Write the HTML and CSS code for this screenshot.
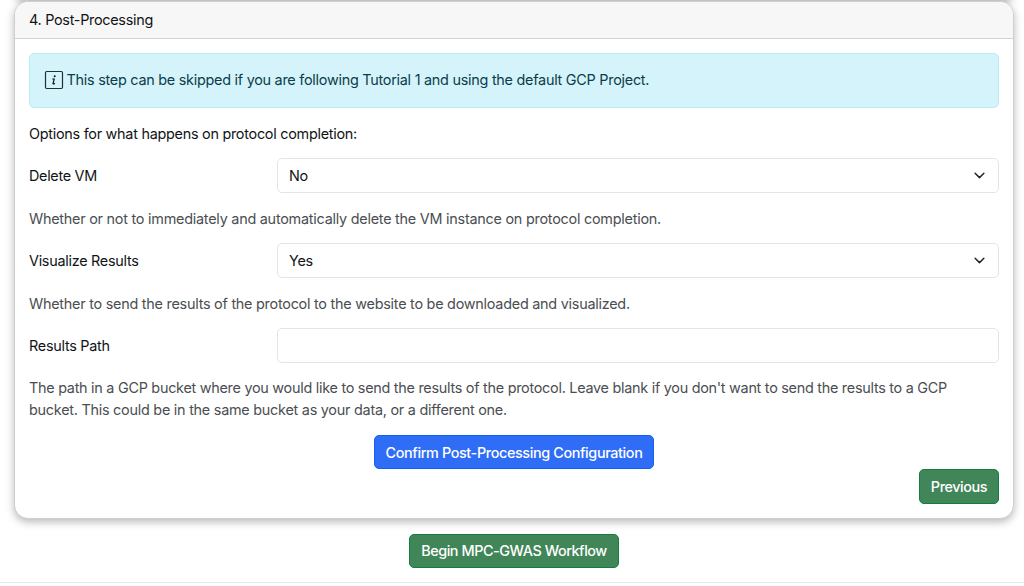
FILE: index.html
```html
<!DOCTYPE html>
<html lang="en">
<head>
<meta charset="utf-8">
<title>Post-Processing</title>
<link rel="stylesheet" href="styles.css">
</head>
<body>
<main class="page">
  <div class="card card-prior"></div>
  <section class="card">
    <header class="card-header"><span class="t-head">4. Post-Processing</span></header>
    <div class="card-body">
      <div class="alert">
        <svg class="info" viewBox="0 0 20 20" width="20" height="20" fill="none" stroke="#222f33">
          <rect x="1.5" y="1.5" width="17" height="17" rx="1.2" stroke-width="1.2"/>
          <circle cx="10.7" cy="6.3" r="1" fill="#111" stroke="none"/>
          <path d="M8.3 9h1.9L9 13.6q-.1.9 1.9-.2" stroke="#111" stroke-width="1.2"/>
        </svg>
        <span class="t-alert">This step can be skipped if you are following Tutorial 1 and using the default GCP Project.</span>
      </div>
      <p class="lead"><span class="t-lead">Options for what happens on protocol completion:</span></p>
      <div class="row">
        <label class="label t-delete">Delete VM</label>
        <div class="control"><span>No</span>
          <svg class="chevron" viewBox="0 0 16 16" width="13" height="13"><path d="m2.6 5.2 5.4 5.4 5.4-5.4"/></svg></div>
      </div>
      <p class="help"><span class="t-help1">Whether or not to immediately and automatically delete the VM instance on protocol completion.</span></p>
      <div class="row">
        <label class="label t-visual">Visualize Results</label>
        <div class="control"><span>Yes</span>
          <svg class="chevron" viewBox="0 0 16 16" width="13" height="13"><path d="m2.6 5.2 5.4 5.4 5.4-5.4"/></svg></div>
      </div>
      <p class="help"><span class="t-help2">Whether to send the results of the protocol to the website to be downloaded and visualized.</span></p>
      <div class="row">
        <label class="label t-path">Results Path</label>
        <div class="control"></div>
      </div>
      <p class="help help-long"><span class="t-help3">The path in a GCP bucket where you would like to send the results of the protocol. Leave blank if you don't want to send the results to a GCP</span><br><span class="t-help4">bucket. This could be in the same bucket as your data, or a different one.</span></p>
      <div class="center"><button class="btn btn-primary"><span class="t-confirm">Confirm Post-Processing Configuration</span></button></div>
      <div class="end"><button class="btn btn-success btn-prev"><span class="t-prev">Previous</span></button></div>
    </div>
  </section>
  <div class="center begin"><button class="btn btn-success btn-begin"><span class="t-begin">Begin MPC-GWAS Workflow</span></button></div>
  <hr class="rule">
</main>
</body>
</html>
```
FILE: styles.css
```css
* { box-sizing: border-box; }
body { margin: 0; background: #fff; color: #111416; font: 14.4px/22px Inter, "Liberation Sans", sans-serif; letter-spacing: -.26px; }
p { margin: 0; }
span, label { white-space: nowrap; }
.page { height: 586px; overflow: hidden; display: flex; flex-direction: column; padding: 0 10px 0 14px; }
.card { flex: none; height: 518px; border: 1px solid #cfcfcf; border-radius: 14px; background: #fff; box-shadow: 0 3px 8px rgba(0, 0, 0, .28); overflow: hidden; }
.card-prior { height: 40px; margin-top: -39px; }
.card-header { height: 37px; padding: 7px 14px; background: #f7f7f7; border-bottom: 1px solid #d2d2d2; }
.card-body { padding: 14px 14px 0; }
.alert { height: 55px; display: flex; align-items: center; gap: 3px; padding: 0 14px 2px 13.5px; border: 1px solid #b9ebf5; border-radius: 5px; background: #d5f3fb; color: #0b3d4a; }
.info { flex: none; }
.lead { padding: 15px 0 13px; }
.row { height: 35px; display: grid; grid-template-columns: 248px 1fr; align-items: center; }
.control { height: 35px; display: flex; align-items: center; justify-content: space-between; padding: 0 12px 0 11px; border: 1px solid #e2e5e8; border-radius: 5px; }
.chevron { fill: none; stroke: #212529; stroke-width: 1.8; stroke-linecap: round; stroke-linejoin: round; }
.help { padding: 15px 0 13px; color: #4a4e52; }
.help-long { padding: 14px 0; }
.center { display: flex; justify-content: center; }
.end { display: flex; justify-content: flex-end; }
.btn { height: 34px; padding: 0; border: 1px solid; border-radius: 5px; color: #fff; font: 500 14.4px/22px Inter, sans-serif; display: flex; align-items: center; justify-content: center; }
.btn-primary { width: 280px; padding-top: 1px; background: #2f6df6; border-color: #1260fa; }
.btn-success { background: #418658; border-color: #167d40; }
.btn-prev { width: 80px; height: 35px; padding-top: 1px; }
.btn-begin { width: 210px; }
.begin { margin-top: 15px; }
.rule { width: 1024px; margin: 14px 0 0 -14px; border: 0; border-top: 1px solid #e6e6e6; }
.t-head { letter-spacing: -.28px; }
.t-alert { letter-spacing: -.255px; }
.t-lead { letter-spacing: -.265px; }
.t-delete { letter-spacing: -.3px; }
.t-help1 { letter-spacing: -.24px; }
.t-visual { letter-spacing: -.27px; }
.t-help2 { letter-spacing: -.245px; }
.t-help3 { letter-spacing: -.268px; }
.t-help4 { letter-spacing: -.247px; }
.t-confirm { letter-spacing: -.38px; }
.t-prev { letter-spacing: -.42px; }
.t-begin { letter-spacing: -.44px; }
```
